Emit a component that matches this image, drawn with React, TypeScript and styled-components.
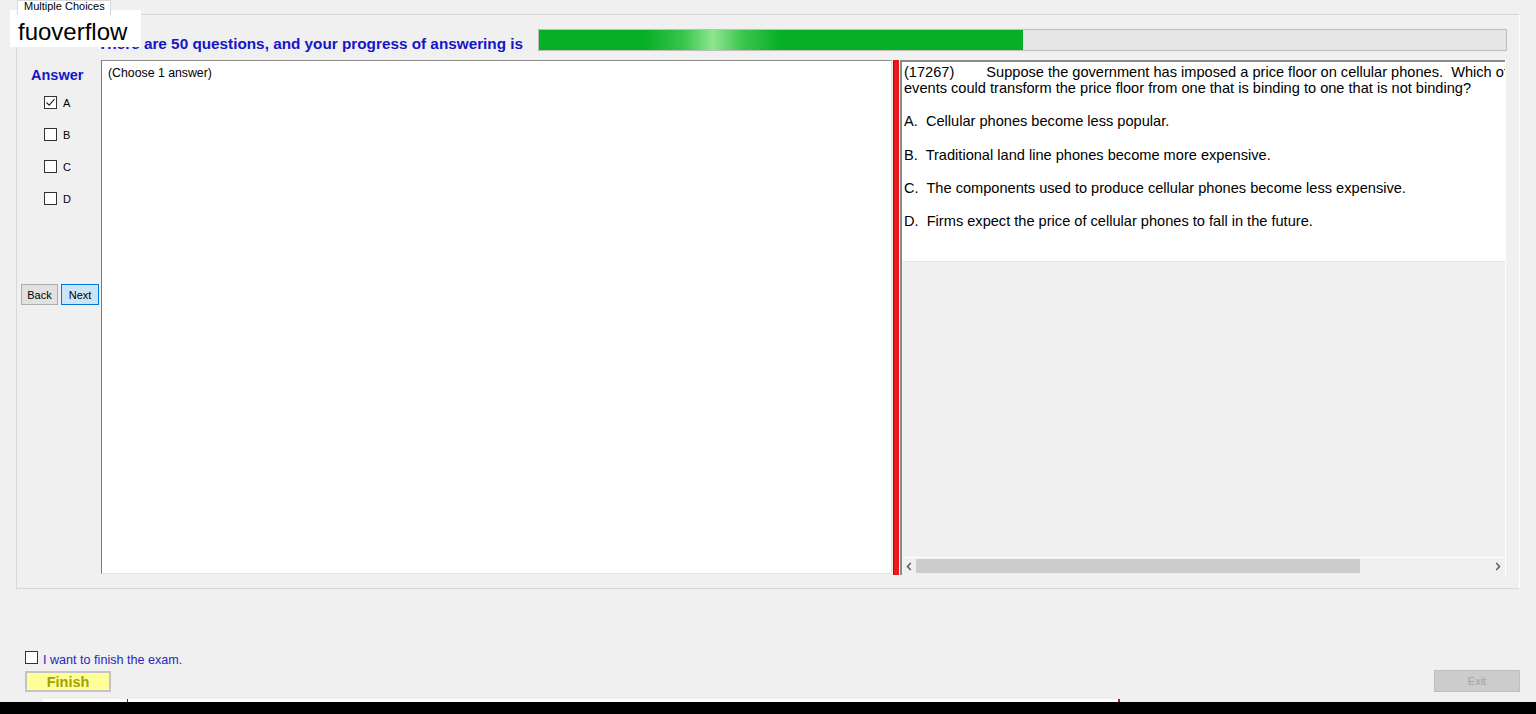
import React from "react";
import styled, { createGlobalStyle } from "styled-components";

const Global = createGlobalStyle`
  html, body { margin: 0; padding: 0; background: #f0f0f0; }
  body { font-family: "Liberation Sans", Arial, sans-serif; overflow: hidden; }
  * { box-sizing: border-box; }
`;

const Page = styled.div`
  position: relative;
  width: 1536px;
  height: 714px;
  background: #f0f0f0;
  display: flex;
  flex-direction: column;
  overflow: hidden;
`;

const TabStrip = styled.div`
  height: 14px;
  display: flex;
  align-items: flex-end;
  padding-left: 17px;
`;

const Tab = styled.div`
  height: 15px;
  margin-bottom: -1px;
  padding: 0 5px 0 6px;
  background: #ffffff;
  border: 1px solid #d9d9d9;
  border-bottom: none;
  font-size: 11px;
  line-height: 13px;
  color: #000;
  overflow: hidden;
  position: relative;
  z-index: 1;
  & > span { display: block; margin-top: -1px; }
`;

const TabPanel = styled.div`
  margin-left: 16px;
  width: 1504px;
  height: 575px;
  border: 1px solid #d9d9d9;
  border-right-color: #ffffff;
  background: #f0f0f0;
  padding: 14px 12px 13px 0;
  display: flex;
  flex-direction: column;
  gap: 9px;
`;

const HeaderRow = styled.div`
  height: 22px;
  display: flex;
  align-items: center;
  padding-left: 81px;
`;

const HeaderText = styled.div`
  font-weight: bold;
  font-size: 15.3px;
  color: #1515c8;
  padding-top: 8px;
  white-space: nowrap;
`;

const Progress = styled.div`
  margin-left: auto;
  width: 969px;
  height: 22px;
  border: 1px solid #bcbcbc;
  background: #e6e6e6;
  display: flex;
`;

const ProgressFill = styled.div`
  height: 100%;
  background: linear-gradient(
    90deg,
    #06b025 0%,
    #06b025 22%,
    #3cc54f 30%,
    #8fe68f 36%,
    #3cc54f 42%,
    #06b025 50%,
    #06b025 100%
  );
`;

const Body = styled.div`
  height: 515px;
  display: grid;
  grid-template-columns: 84px 791px 8px 606px;
`;

const LeftCol = styled.div`
  display: flex;
  flex-direction: column;
`;

const AnswerTitle = styled.div`
  margin: 8px 0 0 14px;
  font-weight: bold;
  font-size: 14.5px;
  line-height: 15px;
  color: #1515c8;
`;

const OptionList = styled.div`
  margin: 13px 0 0 27px;
  display: flex;
  flex-direction: column;
  gap: 19px;
`;

const OptionRow = styled.label`
  display: flex;
  align-items: center;
  gap: 6px;
  height: 13px;
  font-size: 11px;
  color: #000;
`;

const Box = styled.span`
  width: 13px;
  height: 13px;
  border: 1px solid #333333;
  background: #ffffff;
  display: inline-flex;
  align-items: center;
  justify-content: center;
  flex-shrink: 0;
`;

const NavRow = styled.div`
  margin: 79px 0 0 4px;
  display: flex;
  gap: 3px;
`;

const NavButton = styled.button<{ $primary?: boolean }>`
  height: 21px;
  width: ${(p) => (p.$primary ? "38px" : "37px")};
  padding: 0;
  font-family: "Liberation Sans", Arial, sans-serif;
  font-size: 11px;
  color: #000;
  background: ${(p) => (p.$primary ? "#cce4f7" : "#e1e1e1")};
  border: 1px solid ${(p) => (p.$primary ? "#0078d7" : "#adadad")};
`;

const MiddleBox = styled.div`
  height: 514px;
  background: #ffffff;
  border-top: 1px solid #8c8c8c;
  border-left: 1px solid #7a7a7a;
  border-bottom: 1px solid #e3e3e3;
  border-right: 1px solid #e3e3e3;
  padding: 5px 6px;
  font-size: 12.3px;
  color: #000;
`;

const Splitter = styled.div`
  height: 515px;
  margin-left: 1px;
  width: 6px;
  background: #e81a1a;
  border-left: 1px solid #a01010;
`;

const RightPanel = styled.div`
  height: 515px;
  border-left: 2px solid #8a8a8a;
  border-right: 1px solid #ffffff;
  display: flex;
  flex-direction: column;
  background: #f0f0f0;
`;

const QuestionBox = styled.div`
  height: 202px;
  background: #ffffff;
  border-top: 2px solid #8a8a8a;
  border-bottom: 1px solid #e6e6e6;
  padding: 2px 0 0 2px;
  font-size: 14.6px;
  line-height: 16px;
  color: #000;
  white-space: pre;
  overflow: hidden;
`;

const Line = styled.div``;

const Choice = styled.div`
  margin-top: 17.3px;
`;

const Gap = styled.span<{ $w: number }>`
  display: inline-block;
  width: ${(p) => p.$w}px;
`;

const Filler = styled.div`
  flex: 1;
`;

const HScroll = styled.div`
  height: 17px;
  margin-bottom: 1px;
  display: flex;
  align-items: center;
  background: #f0f0f0;
  border-top: 1px solid #ffffff;
`;

const ScrollArrow = styled.div`
  width: 14px;
  height: 16px;
  display: flex;
  align-items: center;
  justify-content: center;
`;

const Track = styled.div`
  flex: 1;
  height: 16px;
  display: flex;
  align-items: center;
`;

const Thumb = styled.div`
  width: 444px;
  height: 14px;
  background: #cdcdcd;
`;

const Footer = styled.div`
  height: 110px;
  display: flex;
  align-items: flex-end;
  justify-content: space-between;
  padding: 0 16px 7px 25px;
`;

const FinishGroup = styled.div`
  display: flex;
  flex-direction: column;
  gap: 4px;
`;

const FinishCheck = styled.label`
  display: flex;
  align-items: flex-start;
  gap: 5px;
  height: 16px;
  font-size: 12.6px;
  line-height: 14px;
  color: #2727c0;
  & > span:last-child { padding-top: 2px; }
`;

const FinishButton = styled.button`
  width: 86px;
  height: 21px;
  padding: 0;
  background: #ffff99;
  border: 2px solid #c4c4c4;
  font-family: "Liberation Sans", Arial, sans-serif;
  font-weight: bold;
  font-size: 14.5px;
  color: #a3a000;
`;

const ExitButton = styled.button`
  width: 86px;
  height: 22px;
  padding: 0;
  background: #cccccc;
  border: 1px solid #bfbfbf;
  font-family: "Liberation Sans", Arial, sans-serif;
  font-size: 11px;
  color: #a3a3a3;
`;

const TaskStrip = styled.div`
  height: 3px;
  display: flex;
  padding-left: 43px;
`;

const StripBar = styled.div`
  width: 1077px;
  height: 3px;
  background: #ffffff;
  display: flex;
  align-items: stretch;
`;

const StripTick = styled.div<{ $at: number; $color: string; $w: number }>`
  margin-left: ${(p) => p.$at}px;
  width: ${(p) => p.$w}px;
  background: ${(p) => p.$color};
`;

const BlackBar = styled.div`
  height: 12px;
  background: #000;
`;

const Watermark = styled.div`
  position: absolute;
  left: 10px;
  top: 10px;
  width: 131px;
  height: 37px;
  background: #ffffff;
  font-family: "Liberation Sans", Arial, sans-serif;
  font-size: 24px;
  line-height: 37px;
  padding: 3px 0 0 8px;
  color: #000;
`;

const Check = () => (
  <svg width="11" height="11" viewBox="0 0 11 11">
    <path d="M1.5 5.5 L4.2 8.2 L9.5 2.2" fill="none" stroke="#222" strokeWidth="1.1" />
  </svg>
);

const Chevron = ({ dir }: { dir: "left" | "right" }) => (
  <svg width="6" height="9" viewBox="0 0 6 9">
    <path
      d={dir === "left" ? "M4.8 1 L1.5 4.5 L4.8 8" : "M1.2 1 L4.5 4.5 L1.2 8"}
      fill="none"
      stroke="#606060"
      strokeWidth="1.6"
    />
  </svg>
);

const options = ["A", "B", "C", "D"];
const checked = ["A"];

const choices = [
  "A.  Cellular phones become less popular.",
  "B.  Traditional land line phones become more expensive.",
  "C.  The components used to produce cellular phones become less expensive.",
  "D.  Firms expect the price of cellular phones to fall in the future.",
];

export default function App() {
  return (
    <Page>
      <Global />
      <TabStrip>
        <Tab>
          <span>Multiple Choices</span>
        </Tab>
      </TabStrip>
      <TabPanel>
        <HeaderRow>
          <HeaderText>There are 50 questions, and your progress of answering is</HeaderText>
          <Progress>
            <ProgressFill style={{ width: `${(25 / 50) * 100}%` }} />
          </Progress>
        </HeaderRow>
        <Body>
          <LeftCol>
            <AnswerTitle>Answer</AnswerTitle>
            <OptionList>
              {options.map((o) => (
                <OptionRow key={o}>
                  <Box>{checked.includes(o) && <Check />}</Box>
                  {o}
                </OptionRow>
              ))}
            </OptionList>
            <NavRow>
              <NavButton>Back</NavButton>
              <NavButton $primary>Next</NavButton>
            </NavRow>
          </LeftCol>
          <MiddleBox>(Choose 1 answer)</MiddleBox>
          <Splitter />
          <RightPanel>
            <QuestionBox>
              <Line>
                (17267)
                <Gap $w={32} />
                Suppose the government has imposed a price floor on cellular phones.  Which of the following
              </Line>
              <Line>events could transform the price floor from one that is binding to one that is not binding?</Line>
              {choices.map((c) => (
                <Choice key={c}>{c}</Choice>
              ))}
            </QuestionBox>
            <Filler />
            <HScroll>
              <ScrollArrow>
                <Chevron dir="left" />
              </ScrollArrow>
              <Track>
                <Thumb />
              </Track>
              <ScrollArrow>
                <Chevron dir="right" />
              </ScrollArrow>
            </HScroll>
          </RightPanel>
        </Body>
      </TabPanel>
      <Footer>
        <FinishGroup>
          <FinishCheck>
            <Box />
            <span>I want to finish the exam.</span>
          </FinishCheck>
          <FinishButton>Finish</FinishButton>
        </FinishGroup>
        <ExitButton disabled>Exit</ExitButton>
      </Footer>
      <TaskStrip>
        <StripBar>
          <StripTick $at={84} $w={1} $color="#333" />
          <StripTick $at={990} $w={5} $color="#c8102e" />
        </StripBar>
      </TaskStrip>
      <BlackBar />
      <Watermark>fuoverflow</Watermark>
    </Page>
  );
}
